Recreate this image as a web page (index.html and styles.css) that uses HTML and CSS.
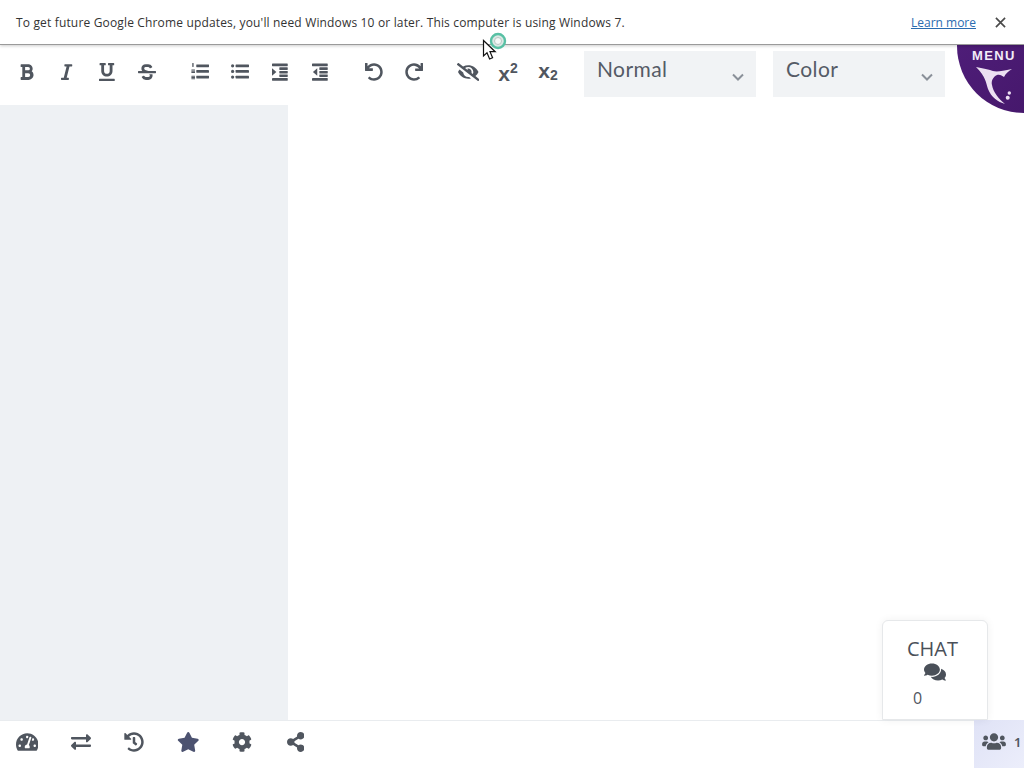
FILE: index.html
```html
<!DOCTYPE html>
<html lang="en">
<head>
<meta charset="utf-8">
<title>Editor</title>
<link rel="stylesheet" href="styles.css">
</head>
<body>
<div class="page">
  <header class="infobar">
    <span class="info-text">To get future Google Chrome updates, you'll need Windows 10 or later. This computer is using Windows 7.</span>
    <a class="info-link" href="#">Learn more</a>
    <svg class="info-close" viewBox="0 0 12 12"><path d="M1 1l10 10M11 1L1 11"/></svg>
  </header>

  <nav class="toolbar">
    <div class="group">
      <button class="tool"><svg class="ic" viewBox="0 0 384 512"><path d="M333.49 238a122 122 0 0 0 27-65.21C367.87 96.49 308 32 233.42 32H34a16 16 0 0 0-16 16v48a16 16 0 0 0 16 16h31.87v288H34a16 16 0 0 0-16 16v48a16 16 0 0 0 16 16h209.32c70.8 0 134.14-51.75 141-122.4 4.74-48.45-16.39-92.06-50.83-119.6zM145.66 112h87.76a48 48 0 0 1 0 96h-87.76zm87.76 288h-87.76V288h87.76a56 56 0 0 1 0 112z"/></svg></button>
      <button class="tool"><svg class="ic" viewBox="0 0 320 512"><path d="M320 48v32a16 16 0 0 1-16 16h-62.76l-80 320H208a16 16 0 0 1 16 16v32a16 16 0 0 1-16 16H16a16 16 0 0 1-16-16v-32a16 16 0 0 1 16-16h62.76l80-320H112a16 16 0 0 1-16-16V48a16 16 0 0 1 16-16h192a16 16 0 0 1 16 16z"/></svg></button>
      <button class="tool"><svg class="ic" viewBox="0 0 448 512"><path d="M32 64h32v160c0 88.22 71.78 160 160 160s160-71.78 160-160V64h32a16 16 0 0 0 16-16V16a16 16 0 0 0-16-16H272a16 16 0 0 0-16 16v32a16 16 0 0 0 16 16h32v160a80 80 0 0 1-160 0V64h32a16 16 0 0 0 16-16V16a16 16 0 0 0-16-16H32a16 16 0 0 0-16 16v32a16 16 0 0 0 16 16zm400 384H16a16 16 0 0 0-16 16v32a16 16 0 0 0 16 16h416a16 16 0 0 0 16-16v-32a16 16 0 0 0-16-16z"/></svg></button>
      <button class="tool"><svg class="ic" viewBox="0 0 512 512"><path d="M496 224H293.9l-87.17-26.83A43.55 43.55 0 0 1 219.55 112h66.79A49.89 49.89 0 0 1 331 139.58a16 16 0 0 0 21.46 7.15l42.94-21.47a16 16 0 0 0 7.16-21.46l-.53-1A128 128 0 0 0 287.51 32h-68a123.68 123.68 0 0 0-123 135.64c2 20.89 10.1 39.83 21.78 56.36H16a16 16 0 0 0-16 16v32a16 16 0 0 0 16 16h480a16 16 0 0 0 16-16v-32a16 16 0 0 0-16-16zm-180.24 96A43 43 0 0 1 336 356.45 43.59 43.59 0 0 1 292.45 400h-66.79A49.89 49.89 0 0 1 181 372.42a16 16 0 0 0-21.46-7.15l-42.94 21.47a16 16 0 0 0-7.16 21.46l.53 1A128 128 0 0 0 224.49 480h68a123.68 123.68 0 0 0 123-135.64 114.25 114.25 0 0 0-5.34-24.36z"/></svg></button>
    </div>
    <div class="group">
      <button class="tool"><svg class="ic" viewBox="0 0 512 512"><rect x="150" y="40" width="362" height="78" rx="12"/><rect x="150" y="200" width="362" height="78" rx="12"/><rect x="150" y="360" width="362" height="78" rx="12"/><rect x="36" y="0" width="38" height="112" rx="10"/><rect x="10" y="182" width="104" height="30" rx="8"/><rect x="10" y="218" width="104" height="30" rx="8"/><rect x="10" y="254" width="104" height="30" rx="8"/><rect x="10" y="362" width="104" height="30" rx="8"/><rect x="10" y="398" width="104" height="30" rx="8"/><rect x="10" y="434" width="104" height="30" rx="8"/></svg></button>
      <button class="tool"><svg class="ic" viewBox="0 0 512 512"><circle cx="46" cy="80" r="46"/><circle cx="46" cy="240" r="46"/><circle cx="46" cy="400" r="46"/><rect x="130" y="42" width="382" height="76" rx="12"/><rect x="130" y="202" width="382" height="76" rx="12"/><rect x="130" y="362" width="382" height="76" rx="12"/></svg></button>
      <button class="tool"><svg class="ic" viewBox="0 0 448 512"><rect y="16" width="448" height="76" rx="12"/><rect x="208" y="124" width="240" height="72" rx="12"/><rect x="208" y="224" width="240" height="72" rx="12"/><rect x="208" y="324" width="240" height="72" rx="12"/><rect y="428" width="448" height="76" rx="12"/><path d="M0 150v212l124-106z"/></svg></button>
      <button class="tool"><svg class="ic" viewBox="0 0 448 512"><rect y="16" width="448" height="76" rx="12"/><rect x="208" y="124" width="240" height="72" rx="12"/><rect x="208" y="224" width="240" height="72" rx="12"/><rect x="208" y="324" width="240" height="72" rx="12"/><rect y="428" width="448" height="76" rx="12"/><path d="M150 150v212L26 256z"/></svg></button>
    </div>
    <div class="group">
      <button class="tool"><svg class="ic" viewBox="0 0 512 512"><path d="M212.333 224.333H12c-6.627 0-12-5.373-12-12V12C0 5.373 5.373 0 12 0h48c6.627 0 12 5.373 12 12v78.112C117.773 39.279 184.26 7.47 258.175 8.007c136.906.994 246.448 111.623 246.157 248.532C504.041 393.258 393.12 504 256.333 504c-64.089 0-122.496-24.313-166.51-64.215-5.099-4.622-5.334-12.554-.467-17.42l33.967-33.967c4.474-4.474 11.662-4.717 16.401-.525C170.76 415.336 211.58 432 256.333 432c97.268 0 176-78.716 176-176 0-97.267-78.716-176-176-176-58.496 0-110.28 28.476-142.274 72.333h98.274c6.627 0 12 5.373 12 12v48c0 6.627-5.373 12-12 12z"/></svg></button>
      <button class="tool"><svg class="ic" viewBox="0 0 512 512"><path d="M500.33 0h-47.41a12 12 0 0 0-12 12.57l4 82.76A247.42 247.42 0 0 0 256 8C119.34 8 7.9 119.53 8 256.19 8.1 393.07 119.1 504 256 504a247.1 247.1 0 0 0 166.18-63.91 12 12 0 0 0 .48-17.43l-34-34a12 12 0 0 0-16.38-.55A176 176 0 1 1 402.1 157.8l-101.53-4.87a12 12 0 0 0-12.57 12v47.41a12 12 0 0 0 12 12h200.33a12 12 0 0 0 12-12V12a12 12 0 0 0-12-12z"/></svg></button>
    </div>
    <div class="group">
      <button class="tool"><svg class="ic" viewBox="0 0 640 512"><path d="M320 400c-75.85 0-137.25-58.71-142.9-133.11L72.2 185.82c-13.79 17.3-26.48 35.59-36.72 55.59a32.35 32.35 0 0 0 0 29.19C89.71 376.41 197.07 448 320 448c26.91 0 52.87-4 77.89-10.46L346 397.39a144.13 144.13 0 0 1-26 2.61zm313.82 58.1l-110.55-85.44a331.25 331.25 0 0 0 81.25-102.07 32.35 32.35 0 0 0 0-29.19C550.29 135.59 442.93 64 320 64a308.15 308.15 0 0 0-147.32 37.7L45.46 3.37A16 16 0 0 0 23 6.18L3.37 31.45A16 16 0 0 0 6.18 53.9l588.36 454.73a16 16 0 0 0 22.46-2.81l19.64-25.27a16 16 0 0 0-2.82-22.45zm-183.72-142l-39.3-30.38A94.75 94.75 0 0 0 416 256a94.76 94.76 0 0 0-121.31-92.21A47.65 47.65 0 0 1 304 192a46.64 46.64 0 0 1-1.54 10l-73.61-56.89A142.31 142.31 0 0 1 320 112a143.92 143.92 0 0 1 144 144c0 21.63-5.29 41.79-13.9 60.11z"/></svg></button>
      <button class="tool script-tool">x<span class="sup">2</span></button>
      <button class="tool script-tool">x<span class="sub">2</span></button>
    </div>
    <div class="selects">
      <div class="select"><span>Normal</span><svg class="chev" viewBox="0 0 12 8"><path d="M1 1.5l5 5 5-5"/></svg></div>
      <div class="select"><span>Color</span><svg class="chev" viewBox="0 0 12 8"><path d="M1 1.5l5 5 5-5"/></svg></div>
    </div>
  </nav>

  <main class="main">
    <aside class="sidebar"></aside>
    <section class="editor"></section>
  </main>

  <footer class="footer">
    <button class="foot"><svg class="fi" viewBox="0 0 576 512"><path d="M288 32C128.94 32 0 160.94 0 320c0 52.8 14.25 102.26 39.06 144.8 5.61 9.62 16.3 15.2 27.44 15.2h443c11.14 0 21.83-5.58 27.44-15.2C561.75 422.26 576 372.8 576 320c0-159.06-128.94-288-288-288zm0 64c14.71 0 26.58 10.13 30.32 23.65-1.11 2.26-2.64 4.23-3.45 6.67l-9.22 27.67c-5.13 3.49-10.97 6.01-17.64 6.01-17.67 0-32-14.33-32-32S270.33 96 288 96zM96 384c-17.67 0-32-14.33-32-32s14.33-32 32-32 32 14.33 32 32-14.33 32-32 32zm48-160c-17.67 0-32-14.33-32-32s14.33-32 32-32 32 14.33 32 32-14.33 32-32 32zm246.77-72.41l-61.33 184C343.13 347.33 352 364.54 352 384c0 11.72-3.38 22.55-8.88 32H232.88c-5.5-9.45-8.88-20.28-8.88-32 0-33.94 26.5-61.43 59.9-63.59l61.34-184.01c4.17-12.56 17.73-19.45 30.36-15.17 12.57 4.19 19.35 17.77 15.17 30.36zm14.66 57.2l15.52-46.55c3.47-1.29 7.13-2.23 11.05-2.23 17.67 0 32 14.33 32 32s-14.33 32-32 32c-11.38-.01-20.89-6.28-26.57-15.22zM480 384c-17.67 0-32-14.33-32-32s14.33-32 32-32 32 14.33 32 32-14.33 32-32 32z"/></svg></button>
    <button class="foot"><svg class="fi" viewBox="0 0 512 512"><path d="M0 168v-16c0-13.255 10.745-24 24-24h360V80c0-21.367 25.899-32.042 40.971-16.971l80 80c9.372 9.373 9.372 24.569 0 33.941l-80 80C409.956 271.982 384 261.456 384 240v-48H24c-13.255 0-24-10.745-24-24zm488 152H128v-48c0-21.314-25.862-32.08-40.971-16.971l-80 80c-9.372 9.373-9.372 24.569 0 33.941l80 80C102.057 463.997 128 453.437 128 432v-48h360c13.255 0 24-10.745 24-24v-16c0-13.255-10.745-24-24-24z"/></svg></button>
    <button class="foot"><svg class="fi" viewBox="0 0 512 512"><path d="M504 255.531c.253 136.64-111.18 248.372-247.82 248.468-59.015.042-113.223-20.53-155.822-54.911-11.077-8.94-11.905-25.541-1.839-35.607l11.267-11.267c8.609-8.609 22.353-9.551 31.891-1.984C173.062 425.135 212.781 440 256 440c101.705 0 184-82.311 184-184 0-101.705-82.311-184-184-184-48.814 0-93.149 18.969-126.068 49.932l50.754 50.754c10.08 10.08 2.941 27.314-11.313 27.314H24c-8.837 0-16-7.163-16-16V38.627c0-14.254 17.234-21.393 27.314-11.314l49.372 49.372C129.209 34.136 189.552 8 256 8c136.81 0 247.747 110.78 248 247.531zm-180.912 78.784l9.823-12.63c8.138-10.463 6.253-25.542-4.21-33.679L288 256.349V152c0-13.255-10.745-24-24-24h-16c-13.255 0-24 10.745-24 24v135.651l65.409 50.874c10.463 8.137 25.541 6.253 33.679-4.21z"/></svg></button>
    <button class="foot star"><svg class="fi" viewBox="0 0 576 512"><path d="M259.3 17.8L194 150.2 47.9 171.5c-26.2 3.8-36.7 36.1-17.7 54.6l105.7 103-25 145.5c-4.5 26.3 23.2 46 46.4 33.7L288 439.6l130.7 68.7c23.2 12.2 50.9-7.4 46.4-33.7l-25-145.5 105.7-103c19-18.5 8.5-50.8-17.7-54.6L382 150.2 316.7 17.8c-11.7-23.6-45.6-23.9-57.4 0z"/></svg></button>
    <button class="foot"><svg class="fi" viewBox="0 0 512 512"><path d="M487.4 315.7l-42.6-24.6c4.3-23.2 4.3-47 0-70.2l42.6-24.6c4.9-2.8 7.1-8.6 5.5-14-11.1-35.6-30-67.8-54.7-94.6-3.8-4.1-10-5.1-14.8-2.3L380.8 110c-17.9-15.4-38.5-27.3-60.8-35.1V25.8c0-5.6-3.9-10.5-9.4-11.7-36.7-8.2-74.3-7.8-109.2 0-5.5 1.2-9.4 6.1-9.4 11.7V75c-22.2 7.9-42.8 19.8-60.8 35.1L88.7 85.5c-4.9-2.8-11-1.9-14.8 2.3-24.7 26.7-43.6 58.9-54.7 94.6-1.7 5.4.6 11.2 5.5 14L67.3 221c-4.3 23.2-4.3 47 0 70.2l-42.6 24.6c-4.9 2.8-7.1 8.6-5.5 14 11.1 35.6 30 67.8 54.7 94.6 3.8 4.1 10 5.1 14.8 2.3l42.6-24.6c17.9 15.4 38.5 27.3 60.8 35.1v49.2c0 5.6 3.9 10.5 9.4 11.7 36.7 8.2 74.3 7.8 109.2 0 5.5-1.2 9.4-6.1 9.4-11.7v-49.2c22.2-7.9 42.8-19.8 60.8-35.1l42.6 24.6c4.9 2.8 11 1.9 14.8-2.3 24.7-26.7 43.6-58.9 54.7-94.6 1.5-5.5-.7-11.3-5.6-14.1zM256 336c-44.1 0-80-35.9-80-80s35.9-80 80-80 80 35.9 80 80-35.9 80-80 80z"/></svg></button>
    <button class="foot"><svg class="fi" viewBox="0 0 448 512"><path d="M352 320c-22.608 0-43.387 7.819-59.79 20.895l-102.486-64.054a96.551 96.551 0 0 0 0-41.683l102.486-64.054C308.613 184.181 329.392 192 352 192c53.019 0 96-42.981 96-96S405.019 0 352 0s-96 42.981-96 96c0 7.158.79 14.13 2.276 20.841L155.79 180.895C139.387 167.819 118.608 160 96 160c-53.019 0-96 42.981-96 96s42.981 96 96 96c22.608 0 43.387-7.819 59.79-20.895l102.486 64.054A96.301 96.301 0 0 0 256 416c0 53.019 42.981 96 96 96s96-42.981 96-96-42.981-96-96-96z"/></svg></button>
    <div class="users">
      <svg class="ui" viewBox="0 0 640 512"><path d="M96 224c35.3 0 64-28.7 64-64s-28.7-64-64-64-64 28.7-64 64 28.7 64 64 64zm448 0c35.3 0 64-28.7 64-64s-28.7-64-64-64-64 28.7-64 64 28.7 64 64 64zm32 32h-64c-17.6 0-33.5 7.1-45.1 18.6 40.3 22.1 68.9 62 75.1 109.4h66c17.7 0 32-14.3 32-32v-32c0-35.3-28.7-64-64-64zm-256 0c61.9 0 112-50.1 112-112S381.9 32 320 32 208 82.1 208 144s50.1 112 112 112zm76.8 32h-8.3c-20.8 10-43.9 16-68.5 16s-47.6-6-68.5-16h-8.3C179.6 288 128 339.6 128 403.2V432c0 26.5 21.5 48 48 48h288c26.5 0 48-21.5 48-48v-28.8c0-63.6-51.6-115.2-115.2-115.2zm-223.7-13.4C161.5 263.1 145.6 256 128 256H64c-35.3 0-64 28.7-64 64v32c0 17.7 14.3 32 32 32h65.9c6.3-47.4 34.9-87.3 75.2-109.4z"/></svg>
      <span class="user-count">1</span>
    </div>
  </footer>

  <div class="menu">
    <span class="menu-label">MENU</span>
    <svg class="menu-logo" viewBox="0 0 40 40"><path d="M1 0C6 1 11 2 15 3 19 5 24 5 37 2 34 4 31 6 29 10 27 9 25 7 22 8 18 10 16 14 17 18 18 25 24 32 30 37 23 35 16 30 13 22 11 16 11 10 1 0z"/><circle cx="34.3" cy="26" r="1.7"/><circle cx="32.7" cy="30.7" r="2"/></svg>
  </div>

  <aside class="chat">
    <span class="chat-title">CHAT</span>
    <svg class="chat-icon" viewBox="0 0 576 512"><path d="M416 192c0-88.4-93.1-160-208-160S0 103.6 0 192c0 34.3 14.1 65.9 38 92-13.4 30.2-35.5 54.2-35.8 54.5-2.2 2.3-2.8 5.7-1.5 8.7S4.8 352 8 352c36.6 0 66.9-12.3 88.7-25 32.2 15.7 70.3 25 111.3 25 114.9 0 208-71.6 208-160zm122 220c23.9-26 38-57.7 38-92 0-66.9-53.5-124.2-129.3-148.1.9 6.6 1.3 13.3 1.3 20.1 0 105.9-107.7 192-240 192-10.8 0-21.3-.8-31.7-1.9C207.8 439.6 281.8 480 368 480c41 0 79.1-9.2 111.3-25 21.8 12.7 52.1 25 88.7 25 3.2 0 6.1-1.9 7.3-4.8 1.3-2.9.7-6.3-1.5-8.7-.3-.3-22.4-24.2-35.8-54.5z"/></svg>
    <span class="chat-count">0</span>
  </aside>

  <svg class="pointer" viewBox="0 0 30 30">
    <circle class="ring" cx="17" cy="7" r="7"/>
    <circle class="ring-core" cx="17" cy="7" r="3.5"/>
    <path class="arrow" d="M2.5 6.5V22L6 18.8 8.6 25l3-1.3-2.6-6h5.2z"/>
  </svg>
</div>
</body>
</html>
```
FILE: styles.css
```css
* { box-sizing: border-box; }
html, body { margin: 0; height: 100%; background: #fff; overflow: hidden; }
.page {
  position: relative;
  display: flex;
  flex-direction: column;
  width: 1024px;
  height: 768px;
  font-family: "Noto Sans", "Liberation Sans", sans-serif;
  color: #4f5661;
}
.infobar {
  display: flex;
  align-items: center;
  flex: none;
  height: 45px;
  padding: 0 18px 0 16px;
  background: #fff;
  border-bottom: 1px solid #9a9a9a;
  box-shadow: 0 1px 3px rgba(0,0,0,.2);
  position: relative;
  z-index: 3;
  font-family: "Open Sans", "Noto Sans", sans-serif;
  font-size: 12px;
  color: #333;
}
.info-text { flex: 1; letter-spacing: 0.16px; }
.info-link { color: #2a6cb0; margin-right: 19px; }
.info-close { width: 11px; height: 11px; fill: none; stroke: #4a4a4a; stroke-width: 1.8; }
.toolbar {
  display: flex;
  align-items: flex-start;
  flex: none;
  height: 60px;
  padding: 6px 0 0 7px;
  gap: 13px;
}
.group { display: flex; }
.group + .group + .group { margin-left: 1px; }
.tool {
  display: flex;
  align-items: center;
  justify-content: center;
  width: 40px;
  height: 42px;
  padding: 0;
  border: 0;
  background: none;
  color: #50565f;
}
.ic { height: 18px; width: auto; fill: currentColor; display: block; }
.script-tool {
  font-family: "Liberation Sans", sans-serif;
  font-size: 21px;
  font-weight: 700;
  line-height: 1;
  padding-top: 2px;
}
.sup { font-size: 14px; align-self: center; margin-top: -11px; }
.sub { font-size: 14px; align-self: center; margin-top: 9px; }
.script-tool:last-child { padding-top: 0; margin-top: -2px; }
.selects { display: flex; gap: 17px; margin-left: 3px; }
.select {
  position: relative;
  width: 172px;
  height: 46px;
  padding: 4px 0 0 13px;
  background: #f1f3f5;
  font-family: "Lato", "Noto Sans", sans-serif;
  font-size: 21px;
  letter-spacing: 0.4px;
  line-height: 28px;
  color: #555b66;
}
.chev {
  position: absolute;
  right: 12px;
  top: 22px;
  width: 12px;
  height: 8px;
  fill: none;
  stroke: #8a9099;
  stroke-width: 2;
}
.main { display: flex; flex: 1; min-height: 0; }
.sidebar { width: 288px; background: #eef1f4; }
.editor { flex: 1; background: #fff; }
.footer {
  display: flex;
  align-items: stretch;
  flex: none;
  height: 48px;
  border-top: 1px solid #e9ecef;
  background: #fff;
}
.foot {
  display: flex;
  align-items: center;
  justify-content: center;
  width: 53.7px;
  padding: 0 0 5px;
  border: 0;
  background: none;
  color: #50565f;
}
.star { color: #4c5270; }
.fi { height: 20px; width: auto; fill: currentColor; display: block; }
.users {
  display: flex;
  align-items: center;
  margin-left: auto;
  width: 50px;
  margin-top: -1px;
  padding: 0 0 5px 8px;
  background: linear-gradient(135deg, #dfe2f6, #eceefb);
  gap: 8px;
  color: #50565f;
}
.ui { width: 24px; height: 19px; fill: currentColor; flex: none; }
.user-count { font-size: 13px; font-weight: 600; }
.menu {
  position: absolute;
  top: 45px;
  right: 0;
  width: 67px;
  height: 68px;
  display: flex;
  flex-direction: column;
  background: linear-gradient(135deg, #4e1d78, #46186c);
  border-bottom-left-radius: 68px;
  z-index: 1;
}
.menu-label {
  margin: 3px 0 0 15px;
  font-family: "Liberation Sans", sans-serif;
  font-size: 13px;
  font-weight: 700;
  letter-spacing: 1.4px;
  line-height: 15px;
  color: #f3ecf8;
}
.menu-logo { flex: none; width: 40px; height: 40px; margin: 4px 0 0 18px; fill: #ece0f2; }
.chat {
  position: absolute;
  left: 882px;
  top: 620px;
  display: flex;
  flex-direction: column;
  width: 106px;
  height: 100px;
  padding-top: 17px;
  background: #fff;
  border: 1px solid #e6e8ea;
  border-radius: 6px 6px 0 0;
  box-shadow: 0 0 8px rgba(0,0,0,.06);
  z-index: 2;
}
.chat-title {
  text-align: center;
  font-family: "Open Sans", "Noto Sans", sans-serif;
  font-size: 20px;
  font-weight: 500;
  line-height: 22px;
  margin-right: 5px;
  color: #4a5059;
}
.chat-icon { align-self: center; width: 22px; height: 20px; margin: 2px 0 0 0; fill: #4a5059; }
.chat-count { margin: 6px 0 0 30px; font-family: "Open Sans", sans-serif; font-size: 16px; line-height: 20px; color: #50565f; }
.pointer { position: absolute; left: 481px; top: 34px; width: 30px; height: 30px; z-index: 4; overflow: visible; }
.ring { fill: #dbe8e4; stroke: #58c0a4; stroke-width: 2.4; }
.ring-core { fill: #f4f8f7; stroke: #b9c6c3; }
.arrow { fill: #fff; stroke: #111; stroke-width: 1.2; }
```
